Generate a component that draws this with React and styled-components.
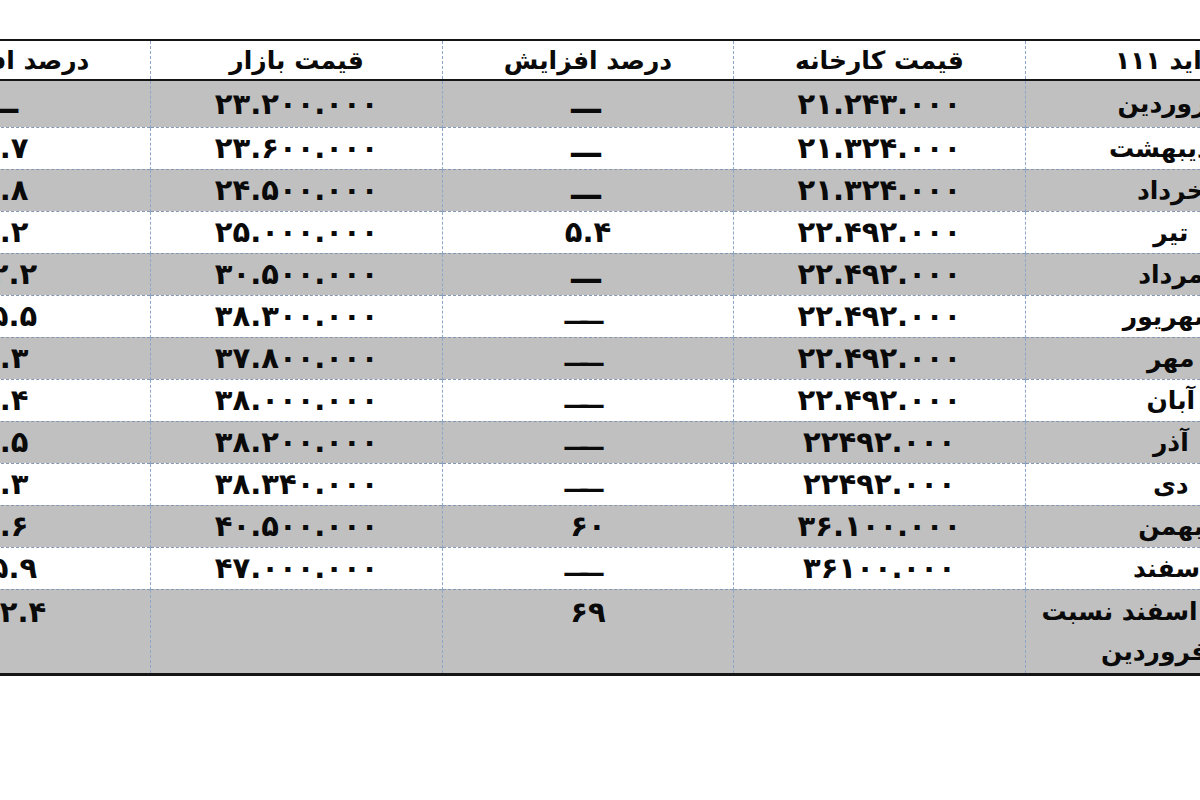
import React from "react";
import styled, { createGlobalStyle } from "styled-components";

const GlobalStyle = createGlobalStyle`
    html, body {
        margin: 0;
        padding: 0;
        background: #ffffff;
    }
    body {
        font-family: "DejaVu Sans", sans-serif;
    }
`;

const Frame = styled.div`
    width: 1200px;
    height: 800px;
    overflow: hidden;
    padding-top: 39px;
    box-sizing: border-box;
    background: #ffffff;
`;

const Sheet = styled.table`
    direction: rtl;
    border-collapse: collapse;
    table-layout: fixed;
    width: 1458px;
    margin-left: -141px;
    border-top: 2px solid #151515;
    border-bottom: 3px solid #151515;
    color: #0a0a0a;
    font-weight: bold;
    font-size: 25px;
`;

const HeadRow = styled.tr`
    height: 40px;
    border-bottom: 2px solid #151515;
    background: #ffffff;
`;

const HeadCell = styled.th`
    font-weight: bold;
    text-align: center;
    vertical-align: middle;
    padding: 0 6px;
    border-left: 1px dashed #8fa7c7;
    border-right: 1px dashed #8fa7c7;
`;

const Row = styled.tr`
    height: ${(props) => (props.tall ? "85px" : props.first ? "47px" : "42px")};
    background: ${(props) => (props.shade ? "#c0c0c0" : "#ffffff")};
    border-top: 1px dashed #8596b2;
`;

const Cell = styled.td`
    text-align: center;
    vertical-align: ${(props) => (props.top ? "top" : "middle")};
    padding: ${(props) => (props.top ? "2px 6px 0" : "0 6px")};
    line-height: ${(props) => (props.top ? "40px" : "normal")};
    font-size: ${(props) => (props.num ? "29px" : "25px")};
    letter-spacing: ${(props) => (props.num ? "11px" : "normal")};
    border-left: 1px dashed #8fa7c7;
    border-right: 1px dashed #8fa7c7;
`;

const Dash = styled.span`
    display: inline-block;
    font-size: ${(props) => (props.long ? "26px" : "34px")};
    letter-spacing: ${(props) => (props.long ? "-10px" : "0")};
    transform: translate(${(props) => (props.long ? "-9px" : "-2px")}, 4px);
`;

const rows = [
    ["فروردین", "۲۱.۲۴۳.۰۰۰", "—", "۲۳.۲۰۰.۰۰۰", "—"],
    ["اردیبهشت", "۲۱.۳۲۴.۰۰۰", "—", "۲۳.۶۰۰.۰۰۰", "۱.۷"],
    ["خرداد", "۲۱.۳۲۴.۰۰۰", "—", "۲۴.۵۰۰.۰۰۰", "۳.۸"],
    ["تیر", "۲۲.۴۹۲.۰۰۰", "۵.۴", "۲۵.۰۰۰.۰۰۰", "۲.۲"],
    ["مرداد", "۲۲.۴۹۲.۰۰۰", "—", "۳۰.۵۰۰.۰۰۰", "۲۲.۲"],
    ["شهریور", "۲۲.۴۹۲.۰۰۰", "——", "۳۸.۳۰۰.۰۰۰", "۲۵.۵"],
    ["مهر", "۲۲.۴۹۲.۰۰۰", "——", "۳۷.۸۰۰.۰۰۰", "۱.۳"],
    ["آبان", "۲۲.۴۹۲.۰۰۰", "——", "۳۸.۰۰۰.۰۰۰", "۰.۴"],
    ["آذر", "۲۲۴۹۲.۰۰۰", "——", "۳۸.۲۰۰.۰۰۰", "۰.۵"],
    ["دی", "۲۲۴۹۲.۰۰۰", "——", "۳۸.۳۴۰.۰۰۰", "۰.۳"],
    ["بهمن", "۳۶.۱۰۰.۰۰۰", "۶۰", "۴۰.۵۰۰.۰۰۰", "۵.۶"],
    ["اسفند", "۳۶۱۰۰.۰۰۰", "——", "۴۷.۰۰۰.۰۰۰", "۱۵.۹"],
];

const Value = ({ text }) =>
    text.startsWith("—") ? <Dash long={text.length > 1}>{text}</Dash> : text;

const App = () => {
    return (
        <>
            <GlobalStyle />
            <Frame>
                <Sheet>
                    <colgroup>
                        <col />
                        <col />
                        <col />
                        <col />
                        <col />
                    </colgroup>
                    <thead>
                        <HeadRow>
                            <HeadCell>پراید ۱۱۱</HeadCell>
                            <HeadCell>قیمت کارخانه</HeadCell>
                            <HeadCell>درصد افزایش</HeadCell>
                            <HeadCell>قیمت بازار</HeadCell>
                            <HeadCell>درصد افزایش</HeadCell>
                        </HeadRow>
                    </thead>
                    <tbody>
                        {rows.map((r, i) => (
                            <Row key={r[0]} shade={i % 2 === 0} first={i === 0}>
                                <Cell>{r[0]}</Cell>
                                <Cell num>{r[1]}</Cell>
                                <Cell num>
                                    <Value text={r[2]} />
                                </Cell>
                                <Cell num>{r[3]}</Cell>
                                <Cell num>
                                    <Value text={r[4]} />
                                </Cell>
                            </Row>
                        ))}
                        <Row shade tall>
                            <Cell top>
                                افزایش اسفند نسبت
                                <br />
                                به فروردین
                            </Cell>
                            <Cell top num></Cell>
                            <Cell top num>۶۹</Cell>
                            <Cell top num></Cell>
                            <Cell top num>۱۰۲.۴</Cell>
                        </Row>
                    </tbody>
                </Sheet>
            </Frame>
        </>
    );
};

export default App;
